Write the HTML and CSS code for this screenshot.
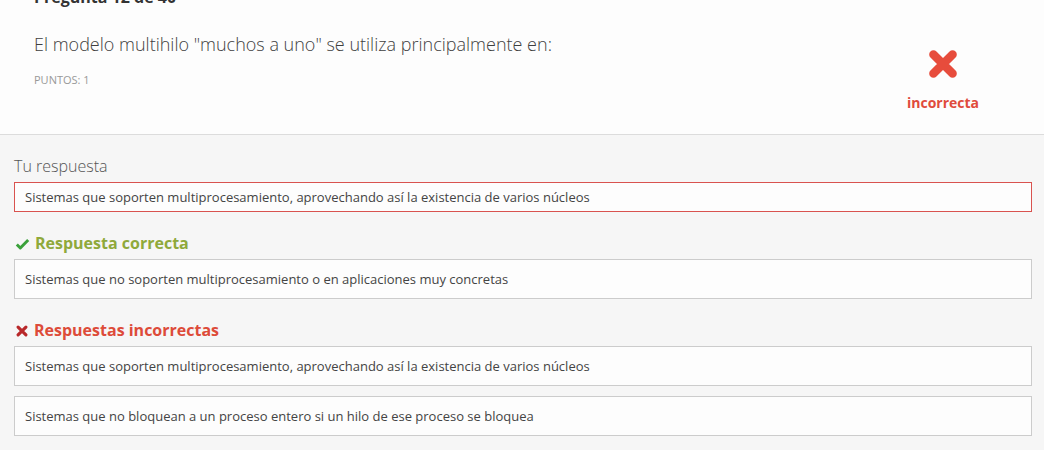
FILE: index.html
```html
<!DOCTYPE html>
<html lang="es">
<head>
<meta charset="utf-8">
<title>Pregunta 12 de 40</title>
<link rel="stylesheet" href="styles.css">
</head>
<body>
<div class="question">
  <div class="q-main">
    <div class="q-title">Pregunta 12 de 40</div>
    <div class="q-text">El modelo multihilo "muchos a uno" se utiliza principalmente en:</div>
    <div class="q-points">PUNTOS: 1</div>
  </div>
  <div class="q-result">
    <svg class="big-x" viewBox="0 0 32 32" width="34" height="34">
      <path d="M7 7 L25 25 M25 7 L7 25" stroke="#e74c3c" stroke-width="8" stroke-linecap="round"/>
    </svg>
    <div class="result-label">incorrecta</div>
  </div>
</div>
<div class="answers">
  <div class="label">Tu respuesta</div>
  <div class="box box-wrong">Sistemas que soporten multiprocesamiento, aprovechando así la existencia de varios núcleos</div>

  <div class="heading heading-ok">
    <svg class="ico" viewBox="0 0 16 16" width="15" height="14">
      <path d="M1.5 8.5 L5.5 12.5 L14.5 3.5" fill="none" stroke="#3aa13a" stroke-width="3.4" stroke-linejoin="round"/>
    </svg>
    <span>Respuesta correcta</span>
  </div>
  <div class="box">Sistemas que no soporten multiprocesamiento o en aplicaciones muy concretas</div>

  <div class="heading heading-bad">
    <svg class="ico" viewBox="0 0 16 16" width="14" height="14">
      <path d="M3.5 3.5 L12.5 12.5 M12.5 3.5 L3.5 12.5" stroke="#b8282a" stroke-width="3.6" stroke-linecap="round"/>
    </svg>
    <span>Respuestas incorrectas</span>
  </div>
  <div class="box-list">
    <div class="box">Sistemas que soporten multiprocesamiento, aprovechando así la existencia de varios núcleos</div>
    <div class="box">Sistemas que no bloquean a un proceso entero si un hilo de ese proceso se bloquea</div>
  </div>
</div>
</body>
</html>
```

FILE: styles.css
```css
* { box-sizing: border-box; }
html, body { margin: 0; padding: 0; }
body {
  font-family: "Open Sans", "Liberation Sans", sans-serif;
  background: #f6f6f6;
  color: #444;
  overflow: hidden;
}
.question {
  display: flex;
  height: 135px;
  background: #fdfdfd;
  border-bottom: 1px solid #dcdcdc;
  padding-left: 34px;
}
.q-main { flex: 1; }
.q-title {
  font-size: 16px;
  font-weight: 700;
  line-height: 22px;
  margin-top: -14px;
  color: #333;
}
.q-text {
  margin-top: 24px;
  font-size: 18px;
  font-weight: 300;
  line-height: 24px;
  color: #3f3f3f;
}
.q-points {
  margin-top: 16px;
  font-size: 11px;
  line-height: 15px;
  color: #999;
}
.q-result {
  width: 140px;
  margin-right: 31px;
  display: flex;
  flex-direction: column;
  align-items: center;
  padding-top: 47px;
}
.big-x { display: block; }
.result-label {
  margin-top: 13px;
  font-size: 14px;
  font-weight: 700;
  line-height: 18px;
  color: #e04b3c;
}
.answers {
  padding: 21px 12px 20px 14px;
}
.label {
  font-size: 16px;
  font-weight: 300;
  line-height: 20px;
  color: #555;
  margin-bottom: 6px;
}
.box {
  background: #fdfdfd;
  border: 1px solid #ccc;
  padding: 11px 10px;
  font-size: 13px;
  line-height: 16px;
  color: #444;
}
.box-wrong {
  border-color: #d9534f;
  padding: 6px 10px;
}
.heading {
  display: flex;
  align-items: center;
  gap: 5px;
  margin-top: 20px;
  margin-bottom: 5px;
  font-size: 16px;
  font-weight: 700;
  line-height: 22px;
}
.heading .ico { margin-left: 1px; margin-top: 2px; }
.heading-ok { color: #8fa93b; }
.heading-bad { color: #dd4b39; }
.box-list {
  display: flex;
  flex-direction: column;
  gap: 10px;
}
```
